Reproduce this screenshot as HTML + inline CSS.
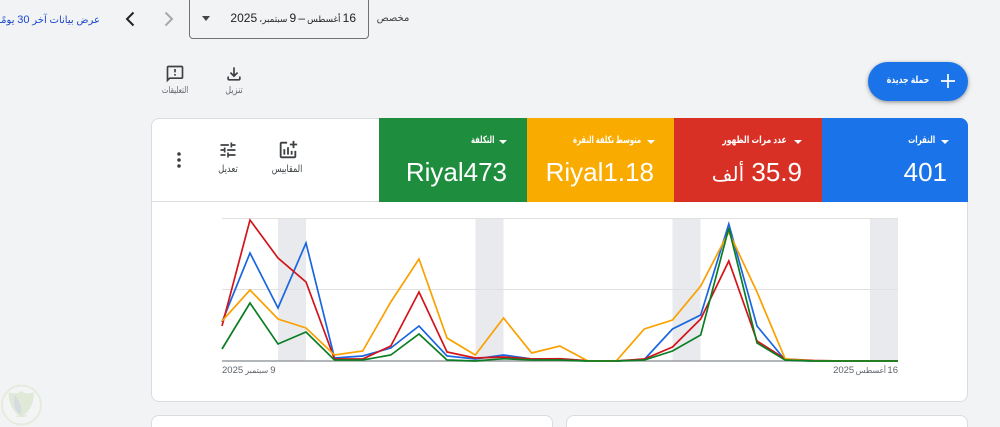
<!DOCTYPE html>
<html lang="ar"><head><meta charset="utf-8"><title>Campaigns</title>
<style>
html,body{margin:0;padding:0;width:1000px;height:427px;overflow:hidden}
body{background:#f2f3f5;font-family:"Liberation Sans","DejaVu Sans",sans-serif;color:#202124}
#w{position:absolute;left:0;top:0;width:1000px;height:427px;overflow:hidden}
.a{position:absolute;white-space:nowrap;line-height:1}
.c{transform-origin:50% 50%}
.r{direction:rtl}
.card{position:absolute;background:#fff;border:1px solid #dadce0;border-radius:8px;box-sizing:border-box}
.tile{position:absolute;top:118px;height:84px;color:#fff}
.tl{position:absolute;top:17px;font-size:10px;font-weight:bold;direction:rtl;white-space:nowrap;line-height:12px;transform-origin:100% 50%}
.tv{position:absolute;top:38px;font-size:26px;line-height:32px;white-space:nowrap}
.tri{position:absolute;top:22px;width:0;height:0;border-left:4px solid transparent;border-right:4px solid transparent;border-top:4px solid #fff}
svg{position:absolute;display:block}
</style></head><body><div id="w">

<div class="a r" style="left:-25px;top:15px;width:125px;font-size:10px;color:#1a47c8;text-align:right">عرض بيانات آخر <span style="font-size:11px">30</span> يومًا</div>
<svg style="left:120px;top:9px" width="20" height="20" viewBox="0 0 20 20"><path d="M13.5 3.500 7 10l6.500 6.500" fill="none" stroke="#202124" stroke-width="2"/></svg>
<svg style="left:159px;top:9px" width="20" height="20" viewBox="0 0 20 20"><path d="M6.500 3.500 13 10l-6.500 6.500" fill="none" stroke="#a6a9ad" stroke-width="2"/></svg>
<div style="position:absolute;left:189px;top:-4px;width:180px;height:43px;box-sizing:border-box;border:1px solid #6f7276;border-radius:4px"></div>
<div class="a" style="left:202px;top:16px;width:0;height:0;border-left:4.500px solid transparent;border-right:4.500px solid transparent;border-top:5px solid #444"></div>
<div class="a r" style="left:219px;top:12px;width:137px;font-size:12px;text-align:right;word-spacing:-1.200px">16 <span style="font-size:8.800px">أغسطس</span> – 9 <span style="font-size:8.800px">سبتمبر،</span> 2025</div>
<div class="a r" style="left:376px;top:14px;width:34px;font-size:10px;text-align:center;color:#3c4043">مخصص</div>

<svg style="left:165px;top:64px" width="20" height="20" viewBox="0 0 24 24"><path fill="#3c4043" d="M20 2H4c-1.100 0-2 .9-2 2v18l4-4h14c1.100 0 2-.9 2-2V4c0-1.100-.9-2-2-2zm0 14H5.170L4 17.170V4h16v12zM11 12h2v2h-2zm0-6h2v4h-2z"/></svg>
<div class="a r" style="left:145px;width:60px;text-align:center;top:86px;font-size:9px;color:#5f6368;transform:scaleX(.78)">التعليقات</div>
<svg style="left:224px;top:64px" width="20" height="20" viewBox="0 0 24 24"><path fill="#3c4043" d="M12 16l-5-5 1.400-1.450 2.600 2.600V4h2v8.150l2.600-2.600L17 11l-5 5zM6 20c-.55 0-1.020-.2-1.410-.59C4.200 19.020 4 18.550 4 18v-3h2v3h12v-3h2v3c0 .55-.2 1.020-.59 1.410-.39.39-.86.59-1.410.59H6z"/></svg>
<div class="a r" style="left:214px;width:40px;text-align:center;top:86px;font-size:9.500px;color:#5f6368;transform:scaleX(.85)">تنزيل</div>

<div style="position:absolute;left:868px;top:62px;width:100px;height:39px;background:#1a73e8;border-radius:20px;box-shadow:0 1px 3px rgba(60,64,67,.4),0 2px 6px rgba(60,64,67,.2)"></div>
<svg style="left:938px;top:71px" width="20" height="20" viewBox="0 0 20 20"><path d="M10 3v14M3 10h14" stroke="#fff" stroke-width="1.700"/></svg>
<div class="a r" style="left:868px;top:76px;width:80px;font-size:10px;font-weight:bold;color:#fff;text-align:center;transform:scaleX(.77)">حملة جديدة</div>

<div class="card" style="left:151px;top:118px;width:817px;height:284px"></div>
<div style="position:absolute;left:152px;top:201px;width:816px;height:1px;background:#dadce0"></div>

<svg style="left:277px;top:139px" width="22" height="22" viewBox="0 0 24 24"><path fill="#3c4043" d="M22 5v2h-3v3h-2V7h-3V5h3V2h2v3h3zm-3 14H5V5h6V3H5c-1.100 0-2 .9-2 2v14c0 1.100.9 2 2 2h14c1.100 0 2-.9 2-2v-6h-2v6zm-4-6v4h2v-4h-2zm-4 4h2V9h-2v8zm-2 0v-6H7v6h2z"/></svg>
<div class="a r" style="left:257px;width:60px;text-align:center;top:165px;font-size:10px;color:#3c4043;transform:scaleX(.8)">المقاييس</div>
<svg style="left:218px;top:140px" width="20" height="20" viewBox="0 0 24 24"><path fill="#3c4043" d="M3 17v2h6v-2H3zM3 5v2h10V5H3zm10 16v-2h8v-2h-8v-2h-2v6h2zM7 9v2H3v2h4v2h2V9H7zm14 4v-2H11v2h10zm-6-4h2V7h4V5h-4V3h-2v6z"/></svg>
<div class="a r" style="left:208px;width:40px;text-align:center;top:165px;font-size:10px;color:#3c4043;transform:scaleX(.85)">تعديل</div>
<svg style="left:175px;top:151px" width="8" height="18" viewBox="0 0 8 18"><circle cx="4" cy="3" r="1.800" fill="#3c4043"/><circle cx="4" cy="9" r="1.800" fill="#3c4043"/><circle cx="4" cy="15" r="1.800" fill="#3c4043"/></svg>

<div class="tile" style="left:379px;width:148px;background:#1e8e3e">
  <div class="tri" style="left:120px"></div>
  <div class="tl" style="right:33px;transform:scaleX(.68)">التكلفة</div>
  <div class="tv" style="right:20px">Riyal473</div>
</div>
<div class="tile" style="left:527px;width:147px;background:#f9ab00">
  <div class="tri" style="left:120px"></div>
  <div class="tl" style="right:33px;transform:scaleX(.68)">متوسط تكلفة النقرة</div>
  <div class="tv" style="right:20px">Riyal1.18</div>
</div>
<div class="tile" style="left:674px;width:148px;background:#d93025">
  <div class="tri" style="left:120px"></div>
  <div class="tl" style="right:35px;transform:scaleX(.76)">عدد مرات الظهور</div>
  <div class="tv r" style="right:20px">35.9 <span style="font-size:20px">ألف</span></div>
</div>
<div class="tile" style="left:822px;width:146px;background:#1a73e8;border-top-right-radius:8px">
  <div class="tri" style="left:119px"></div>
  <div class="tl" style="right:33px;transform:scaleX(.71)">النقرات</div>
  <div class="tv" style="right:21px">401</div>
</div>

<svg style="left:0;top:0" width="1000" height="427" viewBox="0 0 1000 427">
  <g fill="#e8eaed">
    <rect x="278" y="218" width="28" height="143"/>
    <rect x="475.500" y="218" width="28" height="143"/>
    <rect x="672.500" y="218" width="28" height="143"/>
    <rect x="870" y="218" width="28" height="143"/>
  </g>
  <path d="M222 218.500H898M222 289.500H898" stroke="#e0e0e0" stroke-width="1" fill="none"/>
  <path d="M222 361H898" stroke="#9a9da1" stroke-width="1.500" fill="none"/>
  <g fill="none" stroke-width="1.700" stroke-linejoin="miter">
    <polyline stroke="#1a66e0" points="222,322 250,253 278,308 306,243 334.500,358 362.700,356 390.800,348 419,326 447,356 475.300,359 503.500,355 531.700,359 559.800,359 588,361 616.200,361 644.300,359.500 672.500,329 700.700,315 728.800,224 757,326 785.200,360 813.300,361 841.500,361 869.700,361 898,361"/>
    <polyline stroke="#d2141a" points="222,326 250,220 278,258 306,282 334.500,359 362.700,359 390.800,346 419,292 447,352 475.300,358 503.500,357 531.700,359 559.800,358.700 588,360.700 616.200,361 644.300,359 672.500,347 700.700,319 728.800,261 757,341 785.200,359 813.300,360.500 841.500,361 869.700,361 898,361"/>
    <polyline stroke="#f9a100" points="222,321 250,290 278,319 306,328 334.500,355 362.700,351 390.800,302 419,259 447,338 475.300,355 503.500,318 531.700,353 559.800,346 588,361 616.200,361 644.300,329 672.500,320 700.700,286 728.800,232 757,292 785.200,359 813.300,361 841.500,361 869.700,361 898,361"/>
    <polyline stroke="#0b7d23" points="222,349 250,303 278,344 306,332 334.500,360 362.700,360 390.800,355 419,334 447,360 475.300,361 503.500,358.700 531.700,360 559.800,360 588,361 616.200,361 644.300,360 672.500,351 700.700,335 728.800,228 757,343 785.200,360 813.300,361 841.500,361 869.700,361 898,361"/>
  </g>
</svg>
<div class="a r" style="left:222px;top:366px;font-size:9.500px;color:#5f6368;word-spacing:-.6px">9 <span style="font-size:8px">سبتمبر</span> 2025</div>
<div class="a r" style="right:102px;top:366px;font-size:9.500px;color:#5f6368;word-spacing:-1.200px">16 <span style="font-size:8px">أغسطس</span> 2025</div>

<div class="card" style="left:151px;top:415px;width:402px;height:12px;border-bottom:0;border-radius:8px 8px 0 0"></div>
<div class="card" style="left:566px;top:415px;width:402px;height:12px;border-bottom:0;border-radius:8px 8px 0 0"></div>

<svg style="left:0;top:384px" width="43" height="43" viewBox="0 0 43 43" opacity=".42">
  <circle cx="21.500" cy="21" r="19.500" fill="#f5f6f3" stroke="#d4e2c0" stroke-width="2"/>
  <path d="M9 8c4 2 8 2 12.500-1 3.500 3 8 3 12 1 1 10-3 19-12 25C13 28 8 19 9 8z" fill="#c8d9b0"/>
  <path d="M15 11c3 6 8 11 6 20-5-3-9-11-6-20z" fill="#aebcc8"/>
</svg>
<div class="a r" style="left:0;width:43px;text-align:center;top:414px;font-size:5px;color:#dbe3cc">حماية</div>
</div></body></html>
